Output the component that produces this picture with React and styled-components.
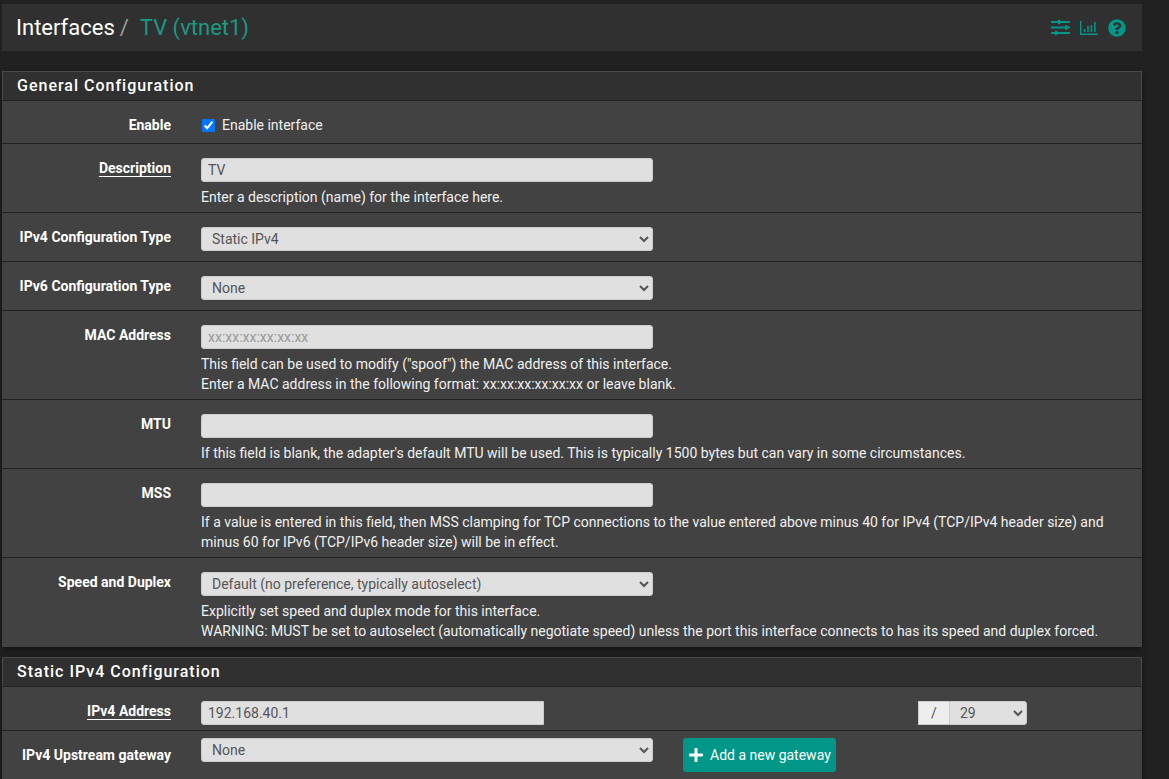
import { useState } from "react";
import styled, { createGlobalStyle } from "styled-components";
import { FaPlus, FaQuestionCircle } from "react-icons/fa";

const GlobalStyle = createGlobalStyle`
  * {
    box-sizing: border-box;
  }

  body {
    margin: 0;
    background-color: #212121;
    color: #f0f0f0;
    font-family: Roboto, "Liberation Sans", sans-serif;
    font-size: 14px;
    line-height: 20px;
  }
`;

const Page = styled.div`
  max-width: 1144px;
  padding: 4px 2px 0;
  margin-right: 25px;
`;

const Header = styled.header`
  display: flex;
  align-items: center;
  justify-content: space-between;
  height: 47px;
  padding: 0 16px 0 14px;
  margin-bottom: 20px;
  background-color: #303030;
`;

const Breadcrumb = styled.h1`
  display: flex;
  gap: 5px;
  margin: 0;
  font-size: 22px;
  font-weight: 400;
  line-height: 28px;
  color: #ffffff;
`;

const Separator = styled.span`
  margin-right: 6px;
  color: #9e9e9e;
`;

const BreadcrumbLink = styled.a`
  color: #1a9a83;
  text-decoration: none;
`;

const HeaderIcons = styled.nav`
  display: flex;
  align-items: center;
  gap: 10px;
`;

const IconLink = styled.a`
  display: flex;
  color: #009688;
`;

const Panel = styled.section`
  background-color: #424242;
  box-shadow: 0 2px 6px rgba(0, 0, 0, 0.5);

  & + & {
    margin-top: 10px;
  }
`;

const PanelTitle = styled.h2`
  height: 30px;
  margin: 0;
  padding: 4px 14px;
  border: 1px solid #4a4a4a;
  border-bottom-color: #212121;
  background-color: #303030;
  color: #ffffff;
  font-size: 16px;
  font-weight: 500;
  letter-spacing: 1px;
  line-height: 20px;
`;

const FormRow = styled.div`
  display: grid;
  grid-template-columns: 169px 1fr;
  column-gap: 30px;
  padding: 14px 15px ${(props) => props.$bottom ?? 5}px 0;
  border-bottom: 1px solid #212121;

  &:last-child {
    border-bottom-color: transparent;
  }
`;

const RowLabel = styled.label`
  color: #ffffff;
  font-weight: 700;
  text-align: right;
  text-decoration: ${(props) => (props.$required ? "underline" : "none")};
  text-underline-offset: 3px;
`;

const Input = styled.input`
  display: block;
  width: 100%;
  max-width: ${(props) => props.$max ?? 452}px;
  height: 24px;
  margin: 0 0 5px;
  padding: 0 6px;
  border: 1px solid #cccccc;
  border-radius: ${(props) => (props.$grouped ? "3px 0 0 3px" : "3px")};
  background-color: #e0e0e0;
  color: #555555;
  font: inherit;

  &::placeholder {
    color: #999999;
  }
`;

const Select = styled.select`
  display: block;
  width: 100%;
  max-width: 452px;
  height: 24px;
  margin: 0 0 5px;
  padding: 0 6px;
  border: 1px solid #cccccc;
  border-radius: 3px;
  background-color: #e0e0e0;
  color: #555555;
  font: inherit;
`;

const Help = styled.p`
  margin: 0;
`;

const CheckLabel = styled.label`
  display: flex;
  align-items: center;
  gap: 7px;
`;

const Checkbox = styled.input`
  width: 13px;
  height: 13px;
  margin: 0 0 0 1px;
`;

const AddressGroup = styled.div`
  display: flex;
  justify-content: space-between;
  max-width: 826px;
`;

const MaskGroup = styled.div`
  display: flex;
  height: 24px;
`;

const MaskAddon = styled.span`
  width: 31px;
  border: 1px solid #cccccc;
  border-right: none;
  background-color: #eeeeee;
  color: #555555;
  line-height: 22px;
  text-align: center;
`;

const MaskSelect = styled(Select)`
  width: 78px;
  border-radius: 0 3px 3px 0;
`;

const GatewayRow = styled(FormRow)`
  padding: 7px 15px 6px 0;

  ${RowLabel} {
    padding-top: 7px;
  }
`;

const GatewayFields = styled.div`
  display: flex;
  gap: 30px;
`;

const AddButton = styled.button`
  display: flex;
  flex-shrink: 0;
  align-items: center;
  gap: 6px;
  height: 34px;
  padding: 0 5px;
  border: none;
  border-radius: 3px;
  background-color: #009688;
  color: #ffffff;
  font: inherit;
  cursor: pointer;
`;

function SlidersIcon() {
  return (
    <svg width="19" height="17" viewBox="0 0 19 17" fill="currentColor" aria-hidden="true">
      <path d="M0 2h19v2H0zM0 7.5h19v2H0zM0 13h19v2H0z" />
      <path d="M7 .7h2.4v4.6H7zM14 6.2h2.4v4.6H14zM4 11.7h2.4v4.6H4z" />
    </svg>
  );
}

function ChartIcon() {
  return (
    <svg width="18" height="14" viewBox="0 0 18 14" fill="currentColor" aria-hidden="true">
      <path d="M0 0h1.4v12.4H18V14H0zM3.8 8h1.6v3H3.8zM7.2 5h1.6v6H7.2zM10.6 4h1.6v7h-1.6zM14 1h1.6v10H14z" />
    </svg>
  );
}

function Field(props) {
  const { id, label, help, required, children } = props;

  return (
    <FormRow>
      <RowLabel htmlFor={id} $required={required}>
        {label}
      </RowLabel>
      <div>
        {children}
        {help && help.map((line) => <Help key={line}>{line}</Help>)}
      </div>
    </FormRow>
  );
}

export default function App() {
  const [enabled, setEnabled] = useState(true);

  return (
    <>
      <GlobalStyle />
      <Page>
        <Header>
          <Breadcrumb>
            Interfaces
            <Separator>/</Separator>
            <BreadcrumbLink href="#interface">TV (vtnet1)</BreadcrumbLink>
          </Breadcrumb>
          <HeaderIcons>
            <IconLink href="#settings" aria-label="Settings">
              <SlidersIcon />
            </IconLink>
            <IconLink href="#status" aria-label="Status">
              <ChartIcon />
            </IconLink>
            <IconLink href="#help" aria-label="Help">
              <FaQuestionCircle size={18} />
            </IconLink>
          </HeaderIcons>
        </Header>

        <Panel>
          <PanelTitle>General Configuration</PanelTitle>
          <FormRow $bottom={8}>
            <RowLabel htmlFor="enable">Enable</RowLabel>
            <CheckLabel>
              <Checkbox
                id="enable"
                type="checkbox"
                checked={enabled}
                onChange={(e) => setEnabled(e.target.checked)}
              />
              Enable interface
            </CheckLabel>
          </FormRow>
          <Field
            id="descr"
            label="Description"
            required
            help={["Enter a description (name) for the interface here."]}
          >
            <Input id="descr" defaultValue="TV" />
          </Field>
          <Field id="type4" label="IPv4 Configuration Type">
            <Select id="type4">
              <option>Static IPv4</option>
            </Select>
          </Field>
          <Field id="type6" label="IPv6 Configuration Type">
            <Select id="type6">
              <option>None</option>
            </Select>
          </Field>
          <Field
            id="mac"
            label="MAC Address"
            help={[
              'This field can be used to modify ("spoof") the MAC address of this interface.',
              "Enter a MAC address in the following format: xx:xx:xx:xx:xx:xx or leave blank.",
            ]}
          >
            <Input id="mac" placeholder="xx:xx:xx:xx:xx:xx" />
          </Field>
          <Field
            id="mtu"
            label="MTU"
            help={[
              "If this field is blank, the adapter's default MTU will be used. This is typically 1500 bytes but can vary in some circumstances.",
            ]}
          >
            <Input id="mtu" />
          </Field>
          <Field
            id="mss"
            label="MSS"
            help={[
              "If a value is entered in this field, then MSS clamping for TCP connections to the value entered above minus 40 for IPv4 (TCP/IPv4 header size) and minus 60 for IPv6 (TCP/IPv6 header size) will be in effect.",
            ]}
          >
            <Input id="mss" />
          </Field>
          <Field
            id="media"
            label="Speed and Duplex"
            help={[
              "Explicitly set speed and duplex mode for this interface.",
              "WARNING: MUST be set to autoselect (automatically negotiate speed) unless the port this interface connects to has its speed and duplex forced.",
            ]}
          >
            <Select id="media">
              <option>Default (no preference, typically autoselect)</option>
            </Select>
          </Field>
        </Panel>

        <Panel>
          <PanelTitle>Static IPv4 Configuration</PanelTitle>
          <FormRow $bottom={0}>
            <RowLabel htmlFor="ipaddr" $required>
              IPv4 Address
            </RowLabel>
            <AddressGroup>
              <Input id="ipaddr" defaultValue="192.168.40.1" $max={343} $grouped />
              <MaskGroup>
                <MaskAddon>/</MaskAddon>
                <MaskSelect aria-label="Subnet mask">
                  <option>29</option>
                </MaskSelect>
              </MaskGroup>
            </AddressGroup>
          </FormRow>
          <GatewayRow>
            <RowLabel htmlFor="gateway">IPv4 Upstream gateway</RowLabel>
            <GatewayFields>
              <Select id="gateway">
                <option>None</option>
              </Select>
              <AddButton type="button">
                <FaPlus size={16} />
                Add a new gateway
              </AddButton>
            </GatewayFields>
          </GatewayRow>
        </Panel>
      </Page>
    </>
  );
}
